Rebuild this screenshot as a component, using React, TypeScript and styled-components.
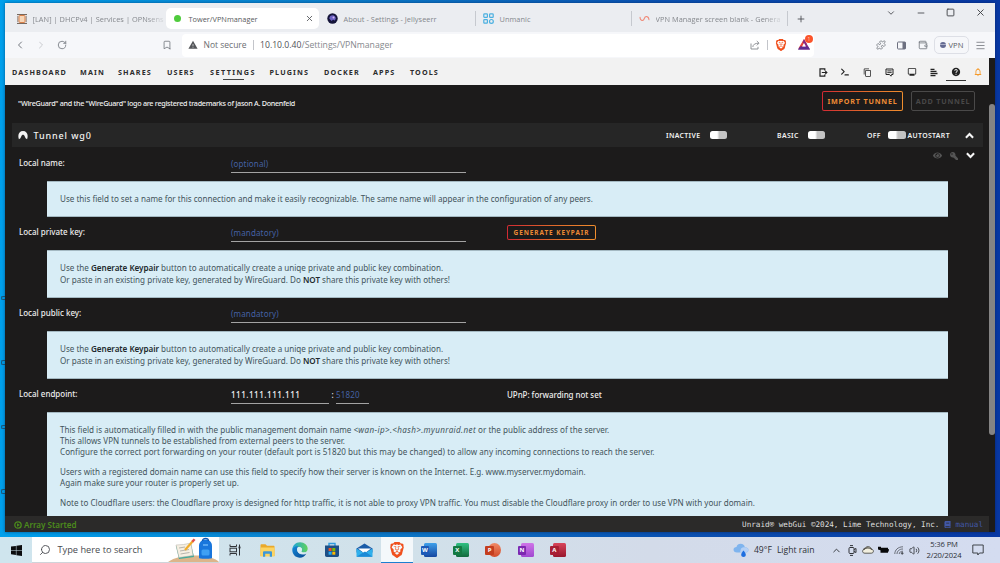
import React from "react";
import styled, { createGlobalStyle, css } from "styled-components";
import {
  ChevronLeft, ChevronRight, RotateCw, Bookmark, Puzzle, Menu, Minus, Square, X, Plus,
  ChevronDown, ChevronUp, Search, Terminal, Wallet, Volume2,
} from "lucide-react";
import { MdOutlineContentCopy, MdHelp, MdNotificationsNone, MdOutlineMonitor, MdWarning } from "react-icons/md";
import { FaEye, FaKey, FaBook } from "react-icons/fa";
import { FaBrave } from "react-icons/fa6";

const ui = `"Open Sans", "Noto Sans", sans-serif`;
const body = `"Noto Sans", "Open Sans", sans-serif`;

const Global = createGlobalStyle`
  * { box-sizing: border-box; }
  body { margin: 0; overflow: hidden; }
  svg { display: block; flex: none; }
`;

const Desktop = styled.div`
  width: 1000px;
  height: 563px;
  display: flex;
  flex-direction: column;
  background: linear-gradient(90deg, #00a0ec 0%, #0b7fcb 33%, #0a52b2 66%, #0838a4 100%);
  font-family: ${ui};
  white-space: nowrap;
`;
const DesktopArea = styled.div`
  display: flex;
  height: 537px;
  padding-top: 3px;
`;
const DesktopEdge = styled.div`
  width: 5px;
  display: flex;
  flex-direction: column;
  align-items: flex-end;
  gap: 60px;
  padding-top: 293px;
  overflow: hidden;
`;
const IconSliver = styled.span`
  flex: none;
  width: 4px;
  height: 4.4px;
  border: 1px solid #1c5678;
  border-radius: 2px 0 0 2px;
  border-right: 0;
`;
const Window = styled.div`
  width: 990px;
  height: 529px;
  display: flex;
  flex-direction: column;
  background: #1c1b1b;
  box-shadow: 0 0 3px rgba(0, 20, 60, 0.5);
`;

/* browser chrome */
const TabStrip = styled.div`
  flex: none;
  height: 29px;
  display: flex;
  align-items: center;
  background: #ebedf1;
  padding-top: 2px;
`;
const Tab = styled.div<{ $w: number; $active?: boolean; $divider?: boolean; $indent?: number }>`
  flex: none;
  width: ${p => p.$w}px;
  height: 21px;
  display: flex;
  align-items: center;
  gap: 5.500px;
  padding: 0 5px 0 ${p => p.$indent ?? 7}px;
  font-size: 7.36px;
  letter-spacing: 0.05px;
  color: #85888d;
  ${p => p.$active && css`
    background: #fff;
    border-radius: 5px;
    color: #595b60;
    letter-spacing: 0;
    svg:last-child { margin-left: auto; }
  `}
  ${p => p.$divider && css`
    background: linear-gradient(#c6c9cf, #c6c9cf) right center / 1px 15px no-repeat;
  `}
`;
const TabTitle = styled.span<{ $fade?: boolean }>`
  ${p => p.$fade && css`mask-image: linear-gradient(90deg, #000 86%, rgba(0, 0, 0, 0.15) 100%);`}
`;
const Dot = styled.span`
  width: 7px;
  height: 7px;
  margin: 0 2px 0 1px;
  border-radius: 50%;
  background: #4fcb3c;
`;
const NewTab = styled.div`
  width: 26px;
  display: flex;
  justify-content: center;
  color: #45474b;
`;
const WindowControls = styled.div`
  display: flex;
  align-self: flex-start;
  margin: 1px 0 0 auto;
  color: #3d3f44;
`;
const Control = styled.span`
  width: 29.7px;
  height: 13px;
  display: flex;
  align-items: center;
  justify-content: center;
`;
const Toolbar = styled.div`
  flex: none;
  height: 26px;
  display: flex;
  align-items: center;
  background: #f6f7fa;
  color: #74787f;
  padding: 0 3px 0 4px;
`;
const ToolButton = styled.span<{ $w?: number; $faint?: boolean }>`
  flex: none;
  width: ${p => p.$w ?? 21}px;
  display: flex;
  justify-content: center;
  opacity: ${p => (p.$faint ? 0.35 : 1)};
`;
const BookmarkButton = styled.span`
  width: 11px;
  margin-left: 90px;
`;
const Address = styled.div`
  flex: none;
  width: 632px;
  height: 23px;
  margin: 0 56px 0 9px;
  display: flex;
  align-items: center;
  padding: 0 0 1px 6px;
  border-radius: 4px;
  background: #fff;
  font-size: 8.66px;
  color: #85888d;
`;
const Security = styled.span`
  margin-left: 5.5px;
  width: 49.5px;
  font-size: 8.5px;
  color: #6c6e72;
`;
const Rule = styled.span`
  width: 1px;
  height: 10px;
  background: #c3c5ca;
`;
const Url = styled.span`
  margin-left: 6px;
  b { font-weight: 400; color: #505257; }
`;
const AddressActions = styled.div`
  margin-left: auto;
  padding-right: 4px;
  display: flex;
  align-items: center;
  gap: 7px;
`;
const RewardsButton = styled.span`
  position: relative;
  margin-left: 4px;
`;
const Badge = styled.span`
  position: absolute;
  top: -4px;
  right: -3px;
  width: 8px;
  height: 8px;
  border-radius: 50%;
  background: #fb542b;
  color: #ffd5c5;
  font-size: 5px;
  line-height: 8px;
  text-align: center;
`;
const VpnPill = styled.span`
  flex: none;
  width: 35px;
  height: 18px;
  margin: 0 1.5px 0 1px;
  display: flex;
  align-items: center;
  justify-content: center;
  gap: 3px;
  border: 1px solid #dddfe6;
  border-radius: 5px;
  font-size: 7.6px;
  color: #5a5d66;
`;
const VpnDot = styled.span`
  width: 6px;
  height: 6px;
  border-radius: 50%;
  background: linear-gradient(#646a92 38%, #a9adc6 38%, #a9adc6 58%, #646a92 58%);
`;

/* web page */
const Page = styled.div`
  display: flex;
  flex: 1;
  min-height: 0;
`;
const Content = styled.div`
  width: 984px;
  display: flex;
  flex-direction: column;
  font-family: ${body};
  & > * { flex: none; }
`;
const ScrollTrack = styled.div`
  width: 6px;
  padding-top: 46px;
`;
const ScrollThumb = styled.div`
  height: 331px;
  border-radius: 3px;
  background: #858484;
`;
const NavBar = styled.nav`
  height: 27px;
  display: flex;
  align-items: center;
  gap: 13.5px;
  padding: 1px 0 0 7px;
  background: #f2f2f2;
`;
const NavItem = styled.a<{ $w: number; $current?: boolean }>`
  width: ${p => p.$w}px;
  height: 15px;
  padding-top: 2px;
  font-size: 7.2px;
  line-height: 10px;
  font-weight: 700;
  letter-spacing: 1.12px;
  color: #2c2c2d;
  ${p => p.$current && css`
    letter-spacing: 1.45px;
    background: linear-gradient(#444, #444) center bottom / 21px 1px no-repeat;
  `}
`;
const NavIcons = styled.div`
  display: flex;
  margin-left: auto;
  color: #222;
`;
const NavIcon = styled.span<{ $current?: boolean; $alert?: boolean }>`
  width: 22.1px;
  height: 17px;
  display: flex;
  align-items: center;
  justify-content: center;
  ${p => p.$current && css`background: linear-gradient(#333, #333) center bottom / 20px 1px no-repeat;`}
  ${p => p.$alert && css`color: #f59a2a;`}
`;
const Intro = styled.div`
  height: 38px;
  display: flex;
  align-items: flex-start;
  padding: 6px 14px 0 13px;
`;
const Trademark = styled.p`
  margin: 7px auto 0 0;
  font-size: 7.2px;
  line-height: 10px;
  font-weight: 500;
  letter-spacing: -0.285px;
  color: #f0f0f0;
`;
const Button = styled.button<{ $w: number; $small?: boolean }>`
  width: ${p => p.$w}px;
  height: ${p => (p.$small ? 15 : 20)}px;
  padding: 0;
  border: 1px solid transparent;
  border-radius: 2px;
  background:
    linear-gradient(#1c1b1b, #1c1b1b) padding-box,
    linear-gradient(90deg, #d22a33 0%, #e0672b 50%, #f08e2e 100%) border-box;
  font: 700 ${p => (p.$small ? "6.4px" : "7.2px")}/12px ${body};
  letter-spacing: ${p => (p.$small ? 0.95 : 0.8)}px;
  text-align: center;
  color: #ee8b35;
  &:disabled {
    margin-left: 8px;
    border-color: #4a4949;
    background: none;
    color: #484747;
  }
`;
const TunnelBar = styled.div`
  height: 24px;
  margin: 0 6px 0 7px;
  padding: 0 9px 0 6px;
  display: flex;
  align-items: center;
  background: #262626;
  color: #f2f2f2;
`;
const TunnelName = styled.h2`
  margin: 0 auto 0 5.5px;
  font-size: 9px;
  font-weight: 500;
  letter-spacing: 0.88px;
`;
const SwitchLabel = styled.span<{ $w: number }>`
  width: ${p => p.$w}px;
  font-size: 6.9px;
  font-weight: 600;
  letter-spacing: 0.36px;
`;
const Switch = styled.span<{ $after: number }>`
  width: 17.5px;
  height: 8px;
  margin-right: ${p => p.$after}px;
  border-radius: 2.5px;
  background: linear-gradient(90deg, #fff 42%, #c3c3c3 55%);
`;
const Field = styled.div<{ $first?: boolean }>`
  height: ${p => (p.$first ? 34 : 33)}px;
  padding: ${p => (p.$first ? 1 : 0)}px 9px 0 14px;
  display: grid;
  grid-template-columns: 212px 276px 1fr;
  align-items: start;
  font-size: 7.97px;
  line-height: 12px;
  font-weight: 500;
  color: #ededed;
`;
const Label = styled.label`
  padding-top: 9px;
`;
const Entry = styled.div`
  display: flex;
  padding-top: 10px;
`;
const Input = styled.span<{ $w: number; $filled?: boolean }>`
  width: ${p => p.$w}px;
  height: 15px;
  border-bottom: 1px solid #a3a3a3;
  font-weight: 400;
  font-size: 8px;
  letter-spacing: 0.15px;
  color: #4561a3;
  ${p => p.$filled && css`color: #f2f2f2; font-weight: 500; font-size: 8.1px; letter-spacing: 0.48px;`}
`;
const Colon = styled.span`
  width: 7px;
  text-align: center;
`;
const Status = styled.span`
  padding-top: 10px;
  letter-spacing: -0.04px;
`;
const ButtonSlot = styled.div`
  padding-top: 8px;
  display: flex;
`;
const RowTools = styled.div`
  display: flex;
  justify-content: flex-end;
  align-items: center;
  gap: 8px;
  padding: 3px 5.500px 0 0;
  color: #555;
`;
const Help = styled.div<{ $tight?: boolean }>`
  margin: 0 41px 0 42px;
  padding: 11px 13px;
  border: 1px solid #a4b9c2;
  border-width: 1px 0;
  background: #d8edf6;
  font-size: 8.09px;
  line-height: 12px;
  color: #43545b;
  b { color: #22292c; font-weight: 600; letter-spacing: -0.03px; }
  i { letter-spacing: 0.36px; }
  p { margin: 0 0 9px; }
  ${p => p.$tight && css`
    && { flex: 1 1 0; }
    min-height: 0;
    line-height: 11px;
    border-bottom: 0;
    padding-bottom: 0;
  `}
`;
const Wide = styled.span`
  letter-spacing: 0.034px;
`;
const Footer = styled.footer`
  height: 16px;
  display: flex;
  align-items: center;
  padding: 1px 6px 0 9px;
  background: #2b2a29;
`;
const ArrayState = styled.span`
  display: flex;
  align-items: center;
  gap: 2px;
  margin-right: auto;
  font-size: 8.1px;
  font-weight: 600;
  color: #4b8a1c;
`;
const Copyright = styled.span`
  display: flex;
  align-items: center;
  gap: 5px;
  font: 7.63px "DejaVu Sans Mono", "Liberation Mono", monospace;
  color: #dedede;
`;
const Manual = styled.a`
  display: flex;
  align-items: center;
  gap: 4px;
  color: #4258a8;
`;

/* taskbar */
const Taskbar = styled.div`
  height: 26px;
  display: flex;
  align-items: center;
  background: linear-gradient(90deg, #cfe5ee 0%, #d1e1ea 40%, #d3dbe9 65%, #d4dcf0 100%);
  color: #2d3036;
`;
const StartButton = styled.div`
  width: 32px;
  display: flex;
  justify-content: center;
`;
const SearchBox = styled.div`
  width: 187px;
  height: 26px;
  display: flex;
  align-items: center;
  padding-left: 7px;
  background: #fff;
  border-bottom: 1px solid #cfd4da;
  font-size: 9.24px;
  color: #484b50;
`;
const SearchText = styled.span`
  margin: 0 auto 0 6.5px;
`;
const TaskButton = styled.div<{ $active?: boolean }>`
  width: 32.35px;
  height: 26px;
  display: flex;
  align-items: center;
  justify-content: center;
  ${p => p.$active && css`background: #f4f8fb; border-bottom: 1.5px solid #1b7fd0;`}
`;
const OfficeTile = styled.span<{ $from: string; $to: string; $round?: boolean }>`
  position: relative;
  width: 13px;
  height: 14px;
  margin-left: 2px;
  border-radius: ${p => (p.$round ? "50%" : "1.5px")};
  background: linear-gradient(${p => p.$from}, ${p => p.$to});
`;
const OfficeLetter = styled.span<{ $c: string }>`
  position: absolute;
  left: -3px;
  top: 3px;
  width: 8.5px;
  height: 8.5px;
  border-radius: 1px;
  background: ${p => p.$c};
  color: #fff;
  font-size: 6px;
  line-height: 8.5px;
  font-weight: 700;
  text-align: center;
`;
const Weather = styled.div`
  margin-left: auto;
  display: flex;
  align-items: center;
  gap: 5px;
  font-size: 8.6px;
  margin-right: 14.5px;
`;
const Tray = styled.div`
  width: 94px;
  display: flex;
  align-items: center;
`;
const TrayIcon = styled.span`
  width: 15.6px;
  display: flex;
  justify-content: center;
`;
const Clock = styled.div`
  width: 44px;
  margin-left: -1px;
  text-align: center;
  font-size: 7.6px;
  line-height: 11.5px;
  letter-spacing: -0.1px;
`;
const Notifications = styled.div`
  width: 24px;
  margin-right: 10px;
  display: flex;
  justify-content: center;
`;

const OfficeApp = ({ letter, from, to, dark, round }: { letter: string; from: string; to: string; dark: string; round?: boolean }) => (
  <TaskButton>
    <OfficeTile $from={from} $to={to} $round={round}>
      <OfficeLetter $c={dark}>{letter}</OfficeLetter>
    </OfficeTile>
  </TaskButton>
);

const OpnIcon = () => (
  <svg width="10" height="10" viewBox="0 0 10 10">
    <path d="M0 .6h10M0 9.400h10M0 3h1.500M0 5h1.500M0 7h1.500M8.500 3H10M8.500 5H10M8.500 7H10" stroke="#6b5a4e" strokeWidth="1" />
    <rect x="2" y="1.500" width="6" height="7" rx="1" fill="#f6d6b8" stroke="#d9814a" strokeWidth="1" />
  </svg>
);
const JellyIcon = () => (
  <svg width="11" height="11" viewBox="0 0 11 11">
    <circle cx="5.500" cy="5.500" r="5.200" fill="#15153a" />
    <path d="M2.300 5.600C2.400 3.500 3.800 2.300 5.600 2.300S8.800 3.600 8.800 5.600L7.900 7.600 6 6.800 4.500 8z" fill="#6d62c4" />
    <circle cx="6.500" cy="4.500" r="1" fill="#d0b8f4" />
  </svg>
);
const UnmanicIcon = () => (
  <svg width="11" height="11" viewBox="0 0 11 11" fill="none" stroke="#4bb0e0" strokeWidth="1.200">
    <rect x=".8" y=".8" width="3.600" height="3.600" rx=".7" />
    <rect x="6.600" y=".8" width="3.600" height="3.600" rx=".7" />
    <rect x=".8" y="6.600" width="3.600" height="3.600" rx=".7" />
    <circle cx="8.400" cy="8.400" r="1.900" />
  </svg>
);
const UnraidMark = () => (
  <svg width="11" height="7" viewBox="0 0 12 8" fill="none" stroke="#f08a78" strokeWidth="1.200" strokeLinecap="round">
    <path d="M.9 2.500C1.100 7 4.800 7.200 5.800 4S10.700 1 11.100 5.500" />
  </svg>
);
const ShareIcon = () => (
  <svg width="10" height="10" viewBox="0 0 10 10" fill="none" stroke="currentColor" strokeWidth=".9">
    <path d="M1 3.500V9h7V6.800M2.800 7C3 4.500 5 3.200 8.800 3.200M6.800 1l2.200 2.200L6.800 5.400" />
  </svg>
);
const TriangleIcon = () => (
  <svg width="12" height="11" viewBox="0 0 12 11">
    <path d="M6 0L9 5.200 6 5.200 3.600 9.500H.3z" fill="#e8463a" />
    <path d="M6 0L12 10.500H0L2.300 7.600H7.300L4.700 3z" fill="#8a2a80" />
    <path d="M0 10.500L2.300 7.600H10L12 10.500z" fill="#5f2d91" />
    <path d="M6 4L8 7.600H4z" fill="#fff" />
  </svg>
);
const SidePanelIcon = () => (
  <svg width="9" height="9" viewBox="0 0 9 9">
    <rect x=".5" y="1" width="8" height="7" rx=".8" fill="none" stroke="#6d7080" strokeWidth="1" />
    <rect x="5.500" y="1" width="3" height="7" fill="#6d7080" />
  </svg>
);
const ExitIcon = () => (
  <svg width="9" height="9" viewBox="0 0 9 9" fill="none" stroke="currentColor" strokeWidth="1.200">
    <path d="M5.800 2.400V.9H1v7.200h4.800V6.600M2.800 4.500H7" />
    <path d="M6.200 2.200L8.700 4.500 6.200 6.800z" fill="currentColor" stroke="none" />
  </svg>
);
const FeedbackIcon = () => (
  <svg width="9" height="9" viewBox="0 0 9 9" fill="none" stroke="currentColor">
    <path d="M1 1h7v5.500H6.500L6 8.200 4.500 6.500H1z" strokeWidth="1" />
    <path d="M2.300 2.900h4.400M2.300 4.600h4.400" strokeWidth=".9" />
  </svg>
);
const LogIcon = () => (
  <svg width="8" height="9" viewBox="0 0 8 9" fill="none" stroke="currentColor" strokeWidth="1.300">
    <path d="M.5 1.300h4M.5 3.400h6M.5 5.500h7M.5 7.600h5" />
  </svg>
);
const ChunkyChevron = ({ down }: { down?: boolean }) => (
  <svg width="9" height="7" viewBox="0 0 9 7" fill="none" stroke="#f6f6f6" strokeWidth="2.100">
    <path d={down ? "M.9 1.300L4.500 4.900 8.100 1.300" : "M.9 5.700L4.500 2.100 8.100 5.700"} />
  </svg>
);
const PlayIcon = () => (
  <svg width="8" height="8" viewBox="0 0 8 8">
    <circle cx="4" cy="4" r="3.200" fill="none" stroke="currentColor" strokeWidth="1.300" />
    <path d="M3 2.300L5.900 4 3 5.700z" fill="currentColor" />
  </svg>
);
const TunnelIcon = () => (
  <svg width="10" height="10" viewBox="0 0 10 10">
    <path d="M.9 9.200C-.7 4.500 1.300 1 5 1s5.700 3.500 4.100 8.200L7.600 8.300 6.300 5.500 5 4.500 3.700 5.500 2.400 8.300z" fill="#f4f4f4" />
  </svg>
);
const WindowsIcon = () => (
  <svg width="11" height="11" viewBox="0 0 11 11" fill="#0b0c0e">
    <path d="M0 1.600L4.900.9V5.200H0zM5.400.8L11 0v5.200H5.400zM0 5.700h4.900V10L0 9.300zM5.400 5.700H11V11l-5.600-.8z" />
  </svg>
);
const SearchArt = () => (
  <svg width="51" height="25" viewBox="0 0 51 25">
    <path d="M0 25C6 20.500 16 18.500 27 18.500S47 21 51 25z" fill="#dcb58a" />
    <path d="M8 9l15-2 3 13-15 2z" fill="#3fa99a" />
    <path d="M8 8l7.500-.5L23 6l2 12.500-14 2z" fill="#f6efe2" stroke="#b5b1a6" strokeWidth=".5" />
    <path d="M11 11l6-1M12 14l9-1.500M12.500 17l9-1.500" stroke="#9c9b96" strokeWidth=".7" />
    <path d="M17 13L25 4" stroke="#f0ad2c" strokeWidth="2.200" />
    <path d="M24.300 4.800L26.600 2.200" stroke="#e04f4a" strokeWidth="2.400" />
    <path d="M31 21V9c0-4 3-6.500 6.500-6.500S44 5 44 9v12c0 1-13 1-13 0z" fill="#1976dc" />
    <path d="M34.500 4C34.500.5 40.500.5 40.500 4" fill="none" stroke="#1056b0" strokeWidth="1.200" />
    <rect x="33.500" y="12.500" width="8" height="6" rx="1.500" fill="#3fa0f4" />
    <path d="M35 8h5" stroke="#7fc4ff" strokeWidth="1.200" />
  </svg>
);
const TaskViewIcon = () => (
  <svg width="12" height="12" viewBox="0 0 12 12" fill="none" stroke="#303338" strokeWidth="1">
    <path d="M1 .5v2h6.500v-2M1 11.500v-2h6.500v2M10.500 .5v11" />
    <rect x="1" y="4.200" width="6.500" height="3.600" />
    <path d="M9.500 3.500h2" strokeWidth="1.800" />
  </svg>
);
const FolderIcon = () => (
  <svg width="15" height="13" viewBox="0 0 15 13">
    <path d="M.5 1.200C.5.600.9.200 1.500.200H5.500L7 1.700h6.500c.6 0 1 .4 1 1V12H.5z" fill="#eaa92a" />
    <path d="M.5 3.500h14V12.500H.5z" fill="#fcd462" />
    <path d="M3 12.800V8.500C3 7.700 3.500 7.200 4.200 7.200h6.600c.7 0 1.200.5 1.200 1.300v4.300H9.800V9.800H5.200v3z" fill="#3d97d8" />
  </svg>
);
const EdgeIcon = () => (
  <svg width="16" height="16" viewBox="0 0 16 16">
    <defs>
      <linearGradient id="edgeTop" x1="0" x2="1"><stop offset="0" stopColor="#1ba3dd" /><stop offset="1" stopColor="#62d35a" /></linearGradient>
      <linearGradient id="edgeBase" x1="0" y1="0" x2="1" y2="1"><stop offset="0" stopColor="#1488d8" /><stop offset="1" stopColor="#0a4a92" /></linearGradient>
    </defs>
    <path d="M.3 8C.3 3.600 3.700.3 8 .3c4.600 0 7.700 3.200 7.700 6.500 0 2.400-1.700 3.800-3.800 3.800-1.500 0-2.500-.6-2.500-1.200 0-.5.6-.7.6-1.800C10 6.200 8.700 5 6.800 5 3.500 5 .3 8 .3 8z" fill="url(#edgeTop)" />
    <path d="M.3 8C1 5 4 3.800 6.500 4.600 5 5.500 4.700 7.500 5.600 9.500c1.200 2.700 4.700 4 8.600 2.200C12.700 14.500 10.500 15.700 8 15.700 3.500 15.700.3 12.400.3 8z" fill="url(#edgeBase)" />
    <path d="M5.600 9.500C4.700 7.500 5 5.800 6.800 5 8.700 5 10 6.200 10 7.600c0 1.100-.6 1.300-.6 1.800 0 .9 1.700 1.500 4.300.8-2 2.300-6.900 2-8.100-.7z" fill="#dceef4" />
  </svg>
);
const StoreIcon = () => (
  <svg width="16" height="16" viewBox="0 0 16 16">
    <path d="M5 4V1.500h6V4" fill="none" stroke="#2e9be0" strokeWidth="1.400" />
    <path d="M1 3.500h14v9.800c0 1-.7 1.700-1.700 1.700H2.700C1.700 15 1 14.300 1 13.300z" fill="#1d4f86" />
    <path d="M4.600 6h3v3h-3z" fill="#f25022" /><path d="M8.300 6h3v3h-3z" fill="#7fba00" />
    <path d="M4.600 9.700h3v3h-3z" fill="#27aaf0" /><path d="M8.300 9.700h3v3h-3z" fill="#ffb900" />
  </svg>
);
const MailIcon = () => (
  <svg width="17" height="15" viewBox="0 0 17 15">
    <path d="M.5 5.500L8.500.5l8 5v4H.5z" fill="#1a5ca8" />
    <path d="M2 5.500h13L8.500 10.500z" fill="#fff" />
    <path d="M.5 5.500l8 5 8-5v8.300H.5z" fill="#2fb0ec" />
    <path d="M.5 13.800L9 8.500l7.500 5.300z" fill="#1c8ad6" />
  </svg>
);
const RainCloud = () => (
  <svg width="16" height="15" viewBox="0 0 16 15">
    <path d="M4 9.500C1.800 9.500.5 8.300.5 6.700S1.800 4 3.500 4C4 2 5.600.8 7.600.8c2.300 0 4 1.500 4.200 3.400 2.200 0 3.700 1 3.700 2.700S14 9.500 12 9.500z" fill="#7fb4ee" />
    <path d="M8 5.500C10 3.500 15 4 15.500 7c0 1.500-1.500 2.500-3.500 2.500H7z" fill="#b4d0f6" />
    <path d="M10.500 7.500c1.500 2 2.300 3 2.300 4.200 0 1.300-1 2.300-2.300 2.300s-2.300-1-2.300-2.300c0-1.200.8-2.200 2.300-4.200z" fill="#1f6fe0" />
  </svg>
);
const MeetIcon = () => (
  <svg width="9" height="11" viewBox="0 0 9 11" fill="none" stroke="#303338" strokeWidth="1">
    <rect x="1" y="2.500" width="5" height="6" rx="1" /><path d="M6 4.500l2-1v4l-2-1M2 .6h3M2 10.400h3" />
  </svg>
);
const TrayCloud = () => (
  <svg width="12" height="8" viewBox="0 0 12 8">
    <path d="M3 7.200C1.500 7.200.6 6.500.6 5.300S1.500 3.400 2.700 3.300C3.200 1.600 4.500.6 6.100.6s3 1.100 3.300 2.700c1.300 0 2 .8 2 1.900 0 1.200-.9 2-2.200 2z" fill="#f2efdf" stroke="#4c4c48" strokeWidth=".9" />
    <path d="M1.200 3.600C3 1.500 8 1.300 10 3.600" fill="none" stroke="#57564e" strokeWidth="1.200" />
  </svg>
);
const BatteryIcon = () => (
  <svg width="11" height="8" viewBox="0 0 11 8" fill="#08090a">
    <path d="M0 .8h3v1h7v5H2.500V4.200L0 3.400zM10.200 3h.8v2.500h-.8z" />
  </svg>
);
const SignalIcon = () => (
  <svg width="10" height="9" viewBox="0 0 10 9" fill="none" stroke="#4c5058" strokeWidth=".8">
    <path d="M.8 8C.8 4 4 .8 9 .8M3 8C3 5.200 5.300 3 9 3M5.200 8C5.200 6.300 6.800 5.200 9 5.200" />
    <circle cx="8.200" cy="7.300" r=".9" fill="#4c5058" />
  </svg>
);
const NoticeIcon = () => (
  <svg width="12" height="12" viewBox="0 0 12 12" fill="none" stroke="#303338" strokeWidth=".9">
    <path d="M.8 1h10.400v8H7.500L5.800 11V9H.8z" />
  </svg>
);

const nav: [string, number][] = [
  ["DASHBOARD", 54.5], ["MAIN", 24.5], ["SHARES", 35.5], ["USERS", 29.5], ["SETTINGS", 46],
  ["PLUGINS", 41], ["DOCKER", 35.5], ["APPS", 23.5], ["TOOLS", 28.5],
];

const KeypairHelp = () => (
  <Help>
    Use the <b>Generate Keypair</b> button to automatically create a uniqe private and public key combination.
    <br />
    Or paste in an existing private key, generated by WireGuard. Do <b>NOT</b> share this private key with others!
  </Help>
);

export default function App() {
  return (
    <Desktop>
      <Global />
      <DesktopArea>
        <DesktopEdge><IconSliver /><IconSliver /><IconSliver /><IconSliver /></DesktopEdge>
        <Window>
          <TabStrip>
            <Tab $w={161} $indent={12}><OpnIcon /><TabTitle $fade>[LAN] | DHCPv4 | Services | OPNsens</TabTitle></Tab>
            <Tab $w={153} $active><Dot /><TabTitle>Tower/VPNmanager</TabTitle><X size={9} strokeWidth={2.400} /></Tab>
            <Tab $w={157} $divider $indent={8}><JellyIcon /><TabTitle>About - Settings - Jellyseerr</TabTitle></Tab>
            <Tab $w={156} $divider><UnmanicIcon /><TabTitle>Unmanic</TabTitle></Tab>
            <Tab $w={156} $divider><UnraidMark /><TabTitle $fade>VPN Manager screen blank - Genera</TabTitle></Tab>
            <NewTab><Plus size={10} strokeWidth={2} /></NewTab>
            <WindowControls>
              <Control><ChevronDown size={10} strokeWidth={2} /></Control>
              <Control><Minus size={10} strokeWidth={2} /></Control>
              <Control><Square size={9} strokeWidth={2.400} /></Control>
              <Control><X size={11} strokeWidth={2} /></Control>
            </WindowControls>
          </TabStrip>
          <Toolbar>
            <ToolButton><ChevronLeft size={12} /></ToolButton>
            <ToolButton $faint><ChevronRight size={12} /></ToolButton>
            <ToolButton><RotateCw size={10} /></ToolButton>
            <BookmarkButton><Bookmark size={10} strokeWidth={2} /></BookmarkButton>
            <Address>
              <MdWarning size={10} color="#55575b" />
              <Security>Not secure</Security>
              <Rule />
              <Url><b>10.10.0.40</b>/Settings/VPNmanager</Url>
              <AddressActions>
                <ShareIcon />
                <Rule />
                <FaBrave size={12} color="#f0501e" />
                <RewardsButton><TriangleIcon /><Badge>1</Badge></RewardsButton>
              </AddressActions>
            </Address>
            <ToolButton><Puzzle size={10} /></ToolButton>
            <ToolButton><SidePanelIcon /></ToolButton>
            <ToolButton><Wallet size={10} /></ToolButton>
            <VpnPill><VpnDot />VPN</VpnPill>
            <ToolButton $w={20}><Menu size={11} strokeWidth={1.800} /></ToolButton>
          </Toolbar>
          <Page>
            <Content>
              <NavBar>
                {nav.map(([name, w]) => <NavItem key={name} $w={w} $current={name === "SETTINGS"}>{name}</NavItem>)}
                <NavIcons>
                  <NavIcon><ExitIcon /></NavIcon>
                  <NavIcon><Terminal size={10} strokeWidth={2.800} /></NavIcon>
                  <NavIcon><MdOutlineContentCopy size={9} /></NavIcon>
                  <NavIcon><FeedbackIcon /></NavIcon>
                  <NavIcon><MdOutlineMonitor size={10} /></NavIcon>
                  <NavIcon><LogIcon /></NavIcon>
                  <NavIcon $current><MdHelp size={10} /></NavIcon>
                  <NavIcon $alert><MdNotificationsNone size={10} /></NavIcon>
                </NavIcons>
              </NavBar>
              <Intro>
                <Trademark>"WireGuard" and the "WireGuard" logo are registered trademarks of Jason A. Donenfeld</Trademark>
                <Button $w={81}>IMPORT TUNNEL</Button>
                <Button $w={64} disabled>ADD TUNNEL</Button>
              </Intro>
              <TunnelBar>
                <TunnelIcon />
                <TunnelName>Tunnel wg0</TunnelName>
                <SwitchLabel $w={43.5}>INACTIVE</SwitchLabel><Switch $after={50} />
                <SwitchLabel $w={30.5}>BASIC</SwitchLabel><Switch $after={42} />
                <SwitchLabel $w={21}>OFF</SwitchLabel><Switch $after={2} />
                <SwitchLabel $w={57.5}>AUTOSTART</SwitchLabel>
                <ChunkyChevron />
              </TunnelBar>
              <Field $first>
                <Label>Local name:</Label>
                <Entry><Input $w={234.5}>(optional)</Input></Entry>
                <RowTools><FaEye size={9} /><FaKey size={8} transform="scale(-1 1)" /><ChunkyChevron down /></RowTools>
              </Field>
              <Help>
                Use this field to set a name for this connection and make it easily recognizable. The same name will appear in the configuration of any peers.
              </Help>
              <Field>
                <Label>Local private key:</Label>
                <Entry><Input $w={234.5}>(mandatory)</Input></Entry>
                <ButtonSlot><Button $w={89} $small>GENERATE KEYPAIR</Button></ButtonSlot>
              </Field>
              <KeypairHelp />
              <Field>
                <Label>Local public key:</Label>
                <Entry><Input $w={234.5}>(mandatory)</Input></Entry>
              </Field>
              <KeypairHelp />
              <Field>
                <Label>Local endpoint:</Label>
                <Entry>
                  <Input $w={98} $filled>111.111.111.111</Input>
                  <Colon>:</Colon>
                  <Input $w={33}>51820</Input>
                </Entry>
                <Status>UPnP: forwarding not set</Status>
              </Field>
              <Help $tight>
                <p>
                  This field is automatically filled in with the public management domain name <i>&lt;wan-ip&gt;.&lt;hash&gt;.myunraid.net</i> or the public address of the server.
                  <br />
                  This allows VPN tunnels to be established from external peers to the server.
                  <br />
                  <Wide>Configure the correct port forwarding on your router (default port is 51820 but this may be changed) to allow any incoming connections to reach the server.</Wide>
                </p>
                <p>
                  Users with a registered domain name can use this field to specify how their server is known on the Internet. E.g. www.myserver.mydomain.
                  <br />
                  Again make sure your router is properly set up.
                </p>
                Note to Cloudflare users: the Cloudflare proxy is designed for http traffic, it is not able to proxy VPN traffic. You must disable the Cloudflare proxy in order to use VPN with your domain.
              </Help>
              <Footer>
                <ArrayState><PlayIcon />Array Started</ArrayState>
                <Copyright>
                  Unraid® webGui ©2024, Lime Technology, Inc.
                  <Manual><FaBook size={7} />manual</Manual>
                </Copyright>
              </Footer>
            </Content>
            <ScrollTrack><ScrollThumb /></ScrollTrack>
          </Page>
        </Window>
      </DesktopArea>
      <Taskbar>
        <StartButton><WindowsIcon /></StartButton>
        <SearchBox><Search size={12} strokeWidth={1.800} transform="scale(-1 1)" /><SearchText>Type here to search</SearchText><SearchArt /></SearchBox>
        <TaskButton><TaskViewIcon /></TaskButton>
        <TaskButton><FolderIcon /></TaskButton>
        <TaskButton><EdgeIcon /></TaskButton>
        <TaskButton><StoreIcon /></TaskButton>
        <TaskButton><MailIcon /></TaskButton>
        <TaskButton $active><FaBrave size={16} color="#f0501e" /></TaskButton>
        <OfficeApp letter="W" from="#3fa0ea" to="#1546a0" dark="#1c59b8" />
        <OfficeApp letter="X" from="#2fc082" to="#12693c" dark="#137a42" />
        <OfficeApp letter="P" from="#f08a66" to="#d24a28" dark="#c43e1e" round />
        <OfficeApp letter="N" from="#cf74e8" to="#a048d0" dark="#7c28b0" />
        <OfficeApp letter="A" from="#d8455a" to="#98162c" dark="#a81e34" />
        <Weather><RainCloud /><span>49°F</span><span>Light rain</span></Weather>
        <Tray>
          <TrayIcon><ChevronUp size={11} strokeWidth={2} /></TrayIcon>
          <TrayIcon><MeetIcon /></TrayIcon>
          <TrayIcon><TrayCloud /></TrayIcon>
          <TrayIcon><BatteryIcon /></TrayIcon>
          <TrayIcon><SignalIcon /></TrayIcon>
          <TrayIcon><Volume2 size={11} strokeWidth={1.800} /></TrayIcon>
        </Tray>
        <Clock>5:36 PM<br />2/20/2024</Clock>
        <Notifications><NoticeIcon /></Notifications>
      </Taskbar>
    </Desktop>
  );
}
